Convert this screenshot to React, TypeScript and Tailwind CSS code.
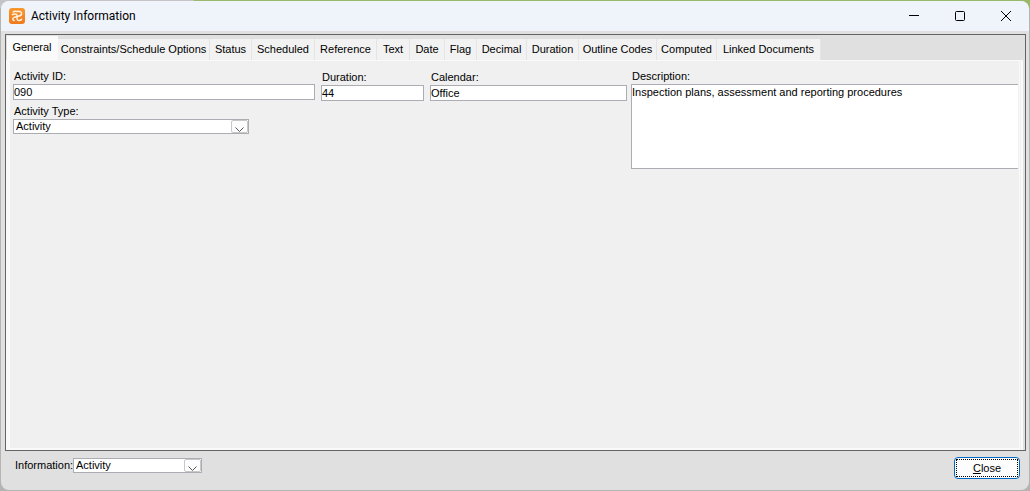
import { useState } from "react";
import type { ReactNode } from "react";

const tabs = [
  { name: "General", width: "w-[51px]" },
  { name: "Constraints/Schedule Options", width: "w-[152px]" },
  { name: "Status", width: "w-[42px]" },
  { name: "Scheduled", width: "w-[63px]" },
  { name: "Reference", width: "w-[62px]" },
  { name: "Text", width: "w-[33px]" },
  { name: "Date", width: "w-[35px]" },
  { name: "Flag", width: "w-[32px]" },
  { name: "Decimal", width: "w-[50px]" },
  { name: "Duration", width: "w-[52px]" },
  { name: "Outline Codes", width: "w-[78px]" },
  { name: "Computed", width: "w-[60px]" },
  { name: "Linked Documents", width: "w-[104px]" },
];

const fieldClass =
  "block h-4 w-full border border-[#abadb3] bg-white p-0 text-[11px] leading-[14px] text-black outline-none";

function AppIcon() {
  return (
    <svg width="16" height="16" viewBox="0 0 16 16" aria-hidden="true">
      <defs>
        <linearGradient id="mark" x1="0" y1="0" x2="0" y2="1">
          <stop offset="0" stopColor="#f9972f" />
          <stop offset="1" stopColor="#f07a1c" />
        </linearGradient>
      </defs>
      <rect width="16" height="16" rx="3" fill="url(#mark)" />
      <g fill="none" stroke="#fff1e0" strokeWidth="1.5" strokeLinecap="round" strokeLinejoin="round">
        <path d="M4.2 4C5.6 2.8 7 3.6 8.6 3.4C11.2 3 13 4.2 12.6 6C12.2 7.8 10.2 8 8.4 8.4" />
        <path d="M3.4 6.6C5 5.8 7.6 5.6 8 7.2C8.4 8.6 6.6 9 5.2 9.4C3.4 10 3.2 12 5.2 12.6" />
        <path d="M8.4 8.6C7.4 10.2 8 12.4 9.8 12.6C11 12.7 11.8 12.2 12.6 11.4" />
      </g>
    </svg>
  );
}

function Combo({ id, value, width }: { id: string; value: string; width: string }) {
  return (
    <div className={`relative ${width}`}>
      <select id={id} defaultValue={value} className="block h-[15px] w-full appearance-none border border-[#abadb3] bg-white pl-[2px] text-[11px] leading-[13px] text-black outline-none">
        <option>{value}</option>
      </select>
      <span className="pointer-events-none absolute top-px right-px flex h-[13px] w-[17px] items-end justify-center rounded-xs border border-[#c8c8c8] bg-[#fdfdfd]">
        <svg width="9" height="5" viewBox="0 0 9 5" fill="none" stroke="#555" aria-hidden="true">
          <path d="M0.5 0.5L4.5 4.5L8.5 0.5" />
        </svg>
      </span>
    </div>
  );
}

function Field({ id, label, className, children }: { id: string; label: string; className: string; children: ReactNode }) {
  return (
    <div className={className}>
      <label htmlFor={id} className="block h-4 pl-px leading-4">{label}</label>
      {children}
    </div>
  );
}

export default function App() {
  const [active, setActive] = useState("General");
  return (
    <div className="flex min-h-screen flex-col bg-[#b4b4b2] bg-[linear-gradient(to_right,#c4c3c6_0_194px,#9ab86a_194px)] bg-[length:100%_8px] bg-no-repeat p-px font-['Liberation_Sans',Arial,sans-serif] text-[11px] text-black">
      <main className="flex flex-1 flex-col overflow-hidden rounded-lg bg-[#e0e0e0]">
        <header className="flex h-[30px] items-center bg-[#eff3fa] pl-2">
          <AppIcon />
          <h1 className="flex-1 pl-[6px] font-[Roboto,'Open_Sans',sans-serif] text-[12px]">Activity Information</h1>
          <button aria-label="Minimize" className="flex h-full w-[46px] items-center justify-center">
            <svg width="10" height="10" viewBox="0 0 10 10" stroke="#000" aria-hidden="true"><path d="M0 4.5H10" /></svg>
          </button>
          <button aria-label="Maximize" className="flex h-full w-[46px] items-center justify-center">
            <svg width="10" height="10" viewBox="0 0 10 10" fill="none" stroke="#000" aria-hidden="true"><rect x="0.5" y="0.5" width="9" height="9" rx="1" /></svg>
          </button>
          <button aria-label="Close window" className="flex h-full w-[46px] items-center justify-center">
            <svg width="10" height="10" viewBox="0 0 10 10" stroke="#000" aria-hidden="true"><path d="M0 0L10 10M10 0L0 10" /></svg>
          </button>
        </header>

        <section className="mt-[3px] mr-[3px] ml-1 flex flex-1 flex-col border border-[#646464] pt-px">
          <div role="tablist" className="flex h-6 items-end pl-px">
            {tabs.map((tab) => (
              <button
                key={tab.name}
                role="tab"
                aria-selected={tab.name === active}
                onClick={() => setActive(tab.name)}
                className={`${tab.width} shrink-0 whitespace-nowrap ${
                  tab.name === active ? "h-6 bg-[#fafafa] pr-px pb-px" : "h-[21px] border-r border-[#e4e4e4] bg-[#f2f2f2]"
                }`}
              >
                {tab.name}
              </button>
            ))}
          </div>
          <div className="mr-[2px] flex flex-1 border-r-2 border-[#fafafa] bg-[#f0f0f0] pr-px">
            <div role="tabpanel" className="flex-1 border border-b-2 border-l-4 border-[#fafafa] pt-[7px] pr-px pl-[3px]">
              <div className="flex items-start">
                <div className="flex w-[302px] flex-col gap-[3px]">
                  <Field id="activity-id" label="Activity ID:" className="w-full">
                    <input id="activity-id" defaultValue="090" className={fieldClass} />
                  </Field>
                  <Field id="activity-type" label="Activity Type:" className="w-full">
                    <Combo id="activity-type" value="Activity" width="w-[236px]" />
                  </Field>
                </div>
                <Field id="duration" label="Duration:" className="ml-[6px] w-[103px] pt-px">
                  <input id="duration" defaultValue="44" className={fieldClass} />
                </Field>
                <Field id="calendar" label="Calendar:" className="ml-[6px] w-[197px] pt-px">
                  <input id="calendar" defaultValue="Office" className={fieldClass} />
                </Field>
                <Field id="description" label="Description:" className="ml-1 flex-1">
                  <textarea id="description" defaultValue="Inspection plans, assessment and reporting procedures" className="block h-[85px] w-full resize-none border border-r-0 border-[#abadb3] bg-white p-0 leading-[14px] outline-none" />
                </Field>
              </div>
            </div>
          </div>
        </section>

        <footer className="flex h-[39px] items-start justify-between pr-[9px] pl-[14px]">
          <div className="flex pt-[7px]">
            <label htmlFor="information" className="w-[58px] whitespace-nowrap leading-[14px]">Information:</label>
            <Combo id="information" value="Activity" width="w-[129px]" />
          </div>
          <button className="mt-[6px] h-[22px] w-[66px] rounded-[4px] border border-[#0067c0] bg-[#fdfdfd] p-px">
            <span className="flex h-full items-center justify-center border border-dotted border-black">
              <span><u>C</u>lose</span>
            </span>
          </button>
        </footer>
      </main>
    </div>
  );
}
